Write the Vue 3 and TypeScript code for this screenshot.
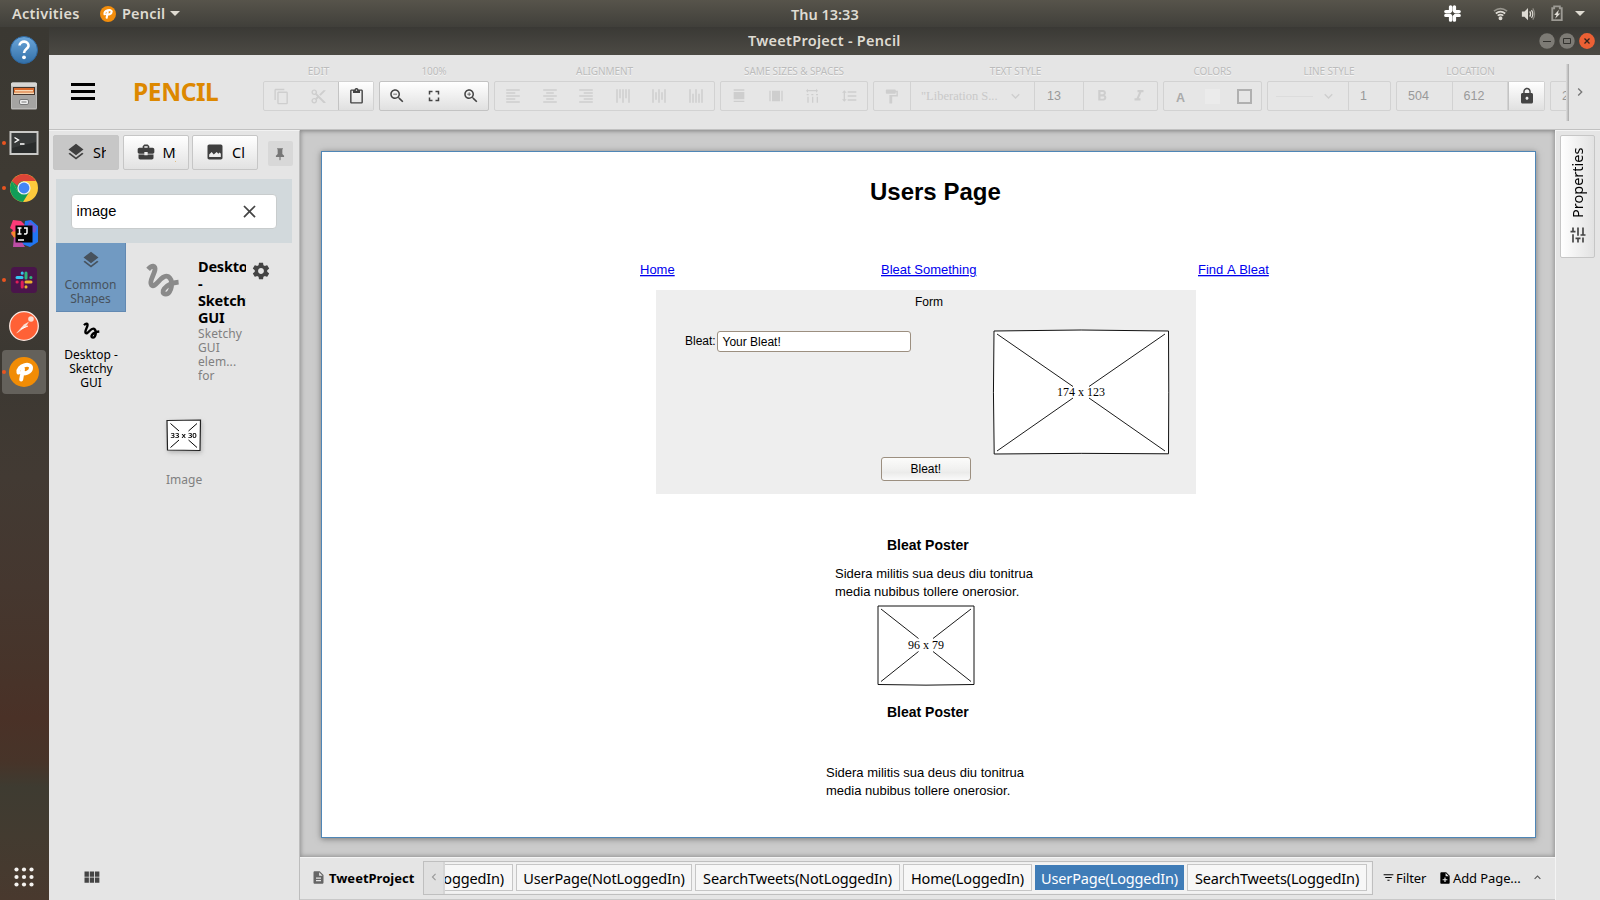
<script setup lang="ts">
import { h } from 'vue'

const copy = 'M16 1H4c-1.1 0-2 .9-2 2v14h2V3h12V1zm3 4H8c-1.1 0-2 .9-2 2v14c0 1.1.9 2 2 2h11c1.1 0 2-.9 2-2V7c0-1.1-.9-2-2-2zm0 16H8V7h11v14z'
const lens = 'M15.5 14h-.79l-.28-.27C15.41 12.59 16 11.11 16 9.5 16 5.91 13.09 3 9.5 3S3 5.91 3 9.5 5.91 16 9.5 16c1.61 0 3.09-.59 4.23-1.57l.27.28v.79l5 4.99L20.49 19l-4.99-5zm-6 0C7.01 14 5 11.99 5 9.5S7.01 5 9.5 5 14 7.01 14 9.5 11.99 14 9.5 14z'
const paths: Record<string, string> = {
  layers: 'M11.99 18.54l-7.37-5.73L3 14.07l9 7 9-7-1.63-1.27-7.38 5.74zM12 16l7.36-5.73L21 9l-9-7-9 7 1.63 1.27L12 16z',
  briefcase: 'M10 16v-1H3.01L3 19c0 1.11.89 2 2 2h14c1.11 0 2-.89 2-2v-4h-7v1h-4zm10-9h-4.01V5l-2-2h-4l-2 2v2H4c-1.1 0-2 .9-2 2v3c0 1.11.89 2 2 2h6v-2h4v2h6c1.1 0 2-.9 2-2V9c0-1.1-.9-2-2-2zm-6 0h-4V5h4v2z',
  image: 'M21 19V5c0-1.1-.9-2-2-2H5c-1.1 0-2 .9-2 2v14c0 1.1.9 2 2 2h14c1.1 0 2-.9 2-2zM5 18v-3l3-3 2.5 3L14 12l2 2 1.500-1.500L19 14v4z',
  pin: 'M7 2h10v2h-1v8l3 3v2h-6v5l-1 1-1-1v-5H5v-2l3-3V4H7z',
  close: 'M19 6.4L17.600 5 12 10.600 6.400 5 5 6.400 10.600 12 5 17.600 6.400 19 12 13.400 17.600 19 19 17.600 13.400 12z',
  copy,
  cut: 'M9.64 7.64c.23-.5.36-1.05.36-1.64 0-2.21-1.79-4-4-4S2 3.79 2 6s1.79 4 4 4c.59 0 1.14-.13 1.64-.36L10 12l-2.36 2.36C7.14 14.13 6.59 14 6 14c-2.21 0-4 1.79-4 4s1.79 4 4 4 4-1.79 4-4c0-.59-.13-1.14-.36-1.64L12 14l7 7h3v-1L9.640 7.640zM6 8c-1.100 0-2-.89-2-2s.9-2 2-2 2 .89 2 2-.9 2-2 2zm0 12c-1.100 0-2-.89-2-2s.9-2 2-2 2 .89 2 2-.9 2-2 2zM19 3l-6 6 2 2 7-7V3z',
  paste: 'M19 2h-4.180C14.400.840 13.300 0 12 0c-1.300 0-2.400.840-2.820 2H5c-1.100 0-2 .9-2 2v16c0 1.100.9 2 2 2h14c1.100 0 2-.9 2-2V4c0-1.100-.9-2-2-2zm-7 0c.55 0 1 .45 1 1s-.45 1-1 1-1-.45-1-1 .45-1 1-1zm7 18H5V4h2v3h10V4h2v16z',
  zoomOut: lens + 'M7 9h5v1H7z',
  zoomIn: lens + 'M12 10h-2v2H9v-2H7V9h2V7h1v2h2v1z',
  fit: 'M7 14H5v5h5v-2H7v-3zm-2-4h2V7h3V5H5v5zm12 7h-3v2h5v-5h-2v3zM14 5v2h3v3h2V5h-5z',
  left: 'M15 15H3v2h12v-2zm0-8H3v2h12V7zM3 13h18v-2H3v2zm0 8h18v-2H3v2zM3 3v2h18V3H3z',
  center: 'M7 15v2h10v-2H7zm-4 6h18v-2H3v2zm0-8h18v-2H3v2zm4-6v2h10V7H7zM3 3v2h18V3H3z',
  right: 'M3 21h18v-2H3v2zm6-4h12v-2H9v2zm-6-4h18v-2H3v2zm6-4h12V7H9v2zM3 3v2h18V3H3z',
  top: 'M3 3h2v18H3zM7 3h2v12H7zM11 3h2v18h-2zM15 3h2v12h-2zM19 3h2v18h-2z',
  middle: 'M3 3h2v18H3zM7 7h2v10H7zM11 3h2v18h-2zM15 7h2v10h-2zM19 3h2v18h-2z',
  bottom: 'M3 3h2v18H3zM7 9h2v12H7zM11 3h2v18h-2zM15 9h2v12h-2zM19 3h2v18h-2z',
  sameWidth: 'M4 2h16v2H4zM4 6h16v11H4zM4 19h16v2H4z',
  sameHeight: 'M2 4h2v16H2zM6 4h12v16H6zM20 4h2v16h-2z',
  spaceH: 'M3 4l3-3v2h12V1l3 3-3 3V5H6v2zM4 9h3v2H4zM11 9h3v2h-3zM18 9h3v2h-3zM5 13h2v9H5zM12 13h2v9h-2zM19 13h2v9h-2z',
  spaceV: 'M6 7h2.500L5 3.500 1.500 7H4v10H1.500L5 20.500 8.500 17H6V7zM10 5v2h13V5H10zM10 19h13v-2H10v2zM10 13h13v-2H10v2z',
  paint: 'M18 4V3c0-.55-.45-1-1-1H5c-.55 0-1 .45-1 1v4c0 .55.45 1 1 1h12c.55 0 1-.45 1-1V6h1v4H9v11c0 .55.45 1 1 1h2c.55 0 1-.45 1-1v-9h8V4h-3z',
  down: 'M16.600 8L12 12.600 7.400 8 6 9.400l6 6 6-6z',
  up: 'M12 8l-6 6 1.400 1.400L12 10.800l4.600 4.600L18 14z',
  next: 'M10 6L8.600 7.400 13.200 12l-4.600 4.600L10 18l6-6z',
  prev: 'M15.400 7.400L14 6l-6 6 6 6 1.400-1.400L10.800 12z',
  bold: 'M15.600 10.790c.97-.67 1.650-1.770 1.650-2.790 0-2.260-1.750-4-4-4H7v14h7.040c2.090 0 3.710-1.700 3.710-3.790 0-1.520-.86-2.820-2.150-3.420zM10 6.500h3c.83 0 1.500.67 1.500 1.500s-.67 1.500-1.500 1.500h-3v-3zm3.500 9H10v-3h3.500c.83 0 1.500.67 1.500 1.500s-.67 1.500-1.500 1.500z',
  italic: 'M10 4v3h2.210l-3.420 8H6v3h8v-3h-2.210l3.420-8H18V4z',
  lock: 'M18 8h-1V6c0-2.760-2.240-5-5-5S7 3.240 7 6v2H6c-1.100 0-2 .9-2 2v10c0 1.100.9 2 2 2h12c1.100 0 2-.9 2-2V10c0-1.100-.9-2-2-2zm-6 9c-1.100 0-2-.9-2-2s.9-2 2-2 2 .9 2 2-.9 2-2 2zm3.100-9H8.900V6c0-1.710 1.390-3.100 3.100-3.100 1.710 0 3.100 1.390 3.100 3.100v2z',
  tune: 'M3 17v2h6v-2H3zM3 5v2h10V5H3zm10 16v-2h8v-2h-8v-2h-2v6h2zM7 9v2H3v2h4v2h2V9H7zm14 4v-2H11v2h10zm-6-4h2V7h4V5h-4V3h-2v6z',
  file: 'M14 2H6c-1.100 0-1.990.9-1.990 2L4 20c0 1.100.89 2 1.990 2H18c1.100 0 2-.9 2-2V8l-6-6zm2 16H8v-2h8v2zm0-4H8v-2h8v2zm-3-5V3.500L18.500 9H13z',
  add: 'M14 2H6c-1.100 0-1.990.9-1.990 2L4 20c0 1.100.89 2 1.990 2H18c1.100 0 2-.9 2-2V8l-6-6zm2 14h-3v3h-2v-3H8v-2h3v-3h2v3h3v2zm-3-7V3.500L18.500 9H13z',
  filter: 'M10 18h4v-2h-4v2zM3 6v2h18V6H3zm3 7h12v-2H6v2z',
  grid: 'M4 11h5V5H4v6zm0 7h5v-6H4v6zm6 0h5v-6h-5v6zm6 0h5v-6h-5v6zm-6-7h5V5h-5v6zm6-6v6h5V5h-5z',
  gear: 'M19.430 12.980c.04-.32.07-.64.07-.98s-.03-.66-.07-.98l2.110-1.650c.19-.15.24-.42.12-.64l-2-3.460c-.12-.22-.39-.3-.61-.22l-2.490 1c-.52-.4-1.080-.73-1.690-.98l-.38-2.650C14.460 2.180 14.250 2 14 2h-4c-.25 0-.46.18-.49.42l-.38 2.650c-.61.25-1.170.59-1.690.98l-2.490-1c-.23-.09-.49 0-.61.22l-2 3.460c-.13.22-.07.49.12.64l2.110 1.650c-.04.32-.07.65-.07.98s.03.66.07.98l-2.110 1.650c-.19.15-.24.42-.12.64l2 3.460c.12.22.39.3.61.22l2.490-1c.52.4 1.080.73 1.690.98l.38 2.650c.03.24.24.42.49.42h4c.25 0 .46-.18.49-.42l.38-2.650c.61-.25 1.170-.59 1.690-.98l2.490 1c.23.09.49 0 .61-.22l2-3.460c.12-.22.07-.49-.12-.64l-2.110-1.650zM12 15.500c-1.930 0-3.500-1.570-3.500-3.500s1.570-3.500 3.500-3.500 3.500 1.570 3.500 3.500-1.570 3.500-3.500 3.500z',
}

const Icon = (props: { name: string; size?: number }) =>
  h('svg', { viewBox: '0 0 24 24', width: props.size ?? 18, height: props.size ?? 18, fill: 'currentColor' }, [
    h('path', { d: paths[props.name] }),
  ])
Icon.props = ['name', 'size']

const squiggle = 'M1.500 4.500C4 1.500 7 1.500 6.300 5C5.500 9 2 13 3.800 15.500C6.500 18.500 11 7.500 15.500 9.500C20 12 18 22 14 22C9.500 22 12.500 14.500 23 13.500'

const alignIcons = ['left', 'center', 'right', 'top', 'middle', 'bottom']
const sizeIcons = ['sameWidth', 'sameHeight', 'spaceH', 'spaceV']

interface PageTab { label: string; cls: string }
const tabs: PageTab[] = [
  { label: 'UserPage(NotLoggedIn)', cls: 't1' },
  { label: 'SearchTweets(NotLoggedIn)', cls: 't2' },
  { label: 'Home(LoggedIn)', cls: 't3' },
  { label: 'UserPage(LoggedIn)', cls: 't4 selected' },
  { label: 'SearchTweets(LoggedIn)', cls: 't5' },
]
</script>

<template>
  <div class="desktop">
    <header class="topbar">
      <span class="activities">Activities</span>
      <svg class="app-mark" viewBox="0 0 30 30"><circle cx="15" cy="15" r="15" fill="#f28d0c" /><path d="M12.500 22L14.500 11M8.500 15.500C7 8 22 5 22 10.500C22 16 15 16.500 12 16" fill="none" stroke="#fff" stroke-width="4" stroke-linecap="round" /></svg>
      <span class="appname">Pencil</span>
      <i class="caret" />
      <span class="clock">Thu 13:33</span>
      <div class="tray">
        <svg class="slack-mark" viewBox="0 0 20 20" stroke="#fff" stroke-width="3.600" stroke-linecap="round"><path d="M8 3v4M3 8h4.500M12.500 8H17M12 3v4M8 12.500V17M12 13v4M3 12h4.500M13 12h4" /></svg>
        <svg class="wifi" viewBox="0 0 16 16" fill="none" stroke="#dedbd4" stroke-width="1.800"><path d="M1 5.500Q8 0 15 5.500" opacity=".5" /><path d="M3 8Q8 4 13 8M5 10.300Q8 8 11 10.300" /><circle cx="8" cy="13" r="1.200" fill="#dedbd4" /></svg>
        <svg class="volume" viewBox="0 0 16 16"><path d="M1 5h3l4-4v14l-4-4H1z" fill="#dedbd4" /><path d="M10 5q2 3 0 6M12 3.500q3 4.500 0 9" fill="none" stroke="#dedbd4" stroke-width="1.400" /><path d="M13.500 1.500q4 6.500 0 13" fill="none" stroke="#8c8982" stroke-width="1.400" /></svg>
        <svg class="battery" viewBox="0 0 14 18"><path d="M2 3.500h2V1.500h6v2h2v12.500H2z" fill="none" stroke="#9c9a94" stroke-width="2" /><path d="M9 5L4 10.500h2.500L5 14.500l5.500-5.500H8z" fill="#dedbd4" /></svg>
        <i class="caret" />
      </div>
    </header>

    <aside class="dock">
      <div class="slot s1">
        <svg viewBox="0 0 30 30"><defs><linearGradient id="help" x2="0" y2="1"><stop stop-color="#6ba6da" /><stop offset="1" stop-color="#3370a8" /></linearGradient></defs><circle cx="15" cy="15" r="13.500" fill="url(#help)" stroke="#2d67a0" /><path d="M10.500 10.500C11 5 20 5.500 19.500 11C19 14 15 14.500 15 18" fill="none" stroke="#fff" stroke-width="2.600" /><circle cx="15" cy="22.300" r="1.900" fill="#fff" /></svg>
      </div>
      <div class="slot s2">
        <svg viewBox="0 0 30 30"><rect x="2" y="1.500" width="26" height="27" rx="1.500" fill="#b9b8b6" /><rect x="2" y="1.500" width="26" height="4" rx="1.500" fill="#d8d7d5" /><rect x="4" y="6" width="22" height="8" fill="#43352e" /><path d="M5 7h20v5H5z" fill="#d96a2d" /><path d="M6 9h18v1.500H6zM5 11.500h20V13H5z" fill="#f6d8b4" /><path d="M3 14h24v13H3z" fill="#a5a4a2" /><rect x="10.500" y="18.500" width="9" height="5" rx="1.500" fill="#eee" stroke="#777" /><path d="M12.500 21h5" stroke="#777" /></svg>
      </div>
      <div class="slot s3"><b class="dot" />
        <svg viewBox="0 0 30 30"><rect x="1.500" y="4" width="27" height="22" fill="#292c2c" stroke="#c9c9c7" stroke-width="2" /><path d="M3 5h24v9L3 20z" fill="#414545" opacity=".6" /><path d="M5.500 9.500l4 2.500-4 2.500M11 16h4.500" fill="none" stroke="#fff" stroke-width="1.400" /></svg>
      </div>
      <div class="slot s4"><b class="dot" />
        <svg viewBox="0 0 30 30"><circle cx="15" cy="15" r="14" fill="#fdc93c" /><path d="M2.900 8A14 14 0 0 0 14 29l6.500-10.500L9 19z" fill="#109d58" /><path d="M2.900 8L9 19l5-5V8.500z" fill="#109d58" /><path d="M2.900 8A14 14 0 0 1 27.100 8H15q-5 0-6.500 5z" fill="#db4437" /><circle cx="15" cy="15" r="6.600" fill="#f2f2f2" /><circle cx="15" cy="15" r="5.400" fill="#4285f4" /></svg>
      </div>
      <div class="slot s5">
        <svg viewBox="0 0 30 30"><path d="M4 1l8 1 4 4-8 15-6-6 2-4-3-2z" fill="#fc3a78" /><path d="M2 13l6-1v6l-3 1z" fill="#f68b2c" /><path d="M16 2l6-1 7 6v16l-8 5-8-3z" fill="#2176f3" /><path d="M20 2l8 6-2 6-8-4z" fill="#6b57d6" /><path d="M5 18l8 5 3 5-5 0-7 0z" fill="#bd4da6" /><rect x="6.500" y="6.500" width="17" height="17" fill="#050505" /><path d="M8.500 9h4M10.500 9v6M8.500 15h4M15 9h3v4.500q0 2-3 1.200M9 21h6" fill="none" stroke="#fff" stroke-width="1.500" /></svg>
      </div>
      <div class="slot s6"><b class="dot" />
        <svg viewBox="0 0 30 30"><rect x="2" y="2" width="26" height="26" rx="3.500" fill="#4a154b" /><g stroke-width="3" stroke-linecap="round"><path d="M13.200 8v.2M8 12.500h5" stroke="#36c5f0" /><path d="M17 8v5M21.800 12.500h.2" stroke="#2eb67d" /><path d="M17 17h5M17 21.800v.2" stroke="#ecb22e" /><path d="M13.200 17v5M8 17h.2" stroke="#e01e5a" /></g></svg>
      </div>
      <div class="slot s7">
        <svg viewBox="0 0 30 30"><circle cx="15" cy="15" r="14.300" fill="#ff6136" stroke="#fbe9e2" stroke-width="1.300" /><path d="M7 22.500l8-9 5-3-3 5-8 6z" fill="#f9ded3" /><circle cx="22" cy="8" r="2.800" fill="#f9ded3" /><path d="M12 18l7-3" stroke="#fff" /></svg>
      </div>
      <div class="slot s8 active"><b class="dot" />
        <svg viewBox="0 0 30 30"><circle cx="15" cy="15" r="15" fill="#f18c05" /><path d="M12.200 22.500L14 12M9.500 15.500C8 8.500 22 5 22 10.800C22 16 15.500 16.800 12.500 16.300" fill="none" stroke="#fff" stroke-width="4" stroke-linecap="round" /></svg>
      </div>
      <div class="slot s9">
        <svg viewBox="0 0 30 30" fill="#f5f3f0"><template v-for="r in 3" :key="r"><circle v-for="c in 3" :key="c" :cx="c * 7.500" :cy="r * 7.500" r="2.100" /></template></svg>
      </div>
    </aside>

    <main class="window">
      <div class="titlebar">
        <span class="wtitle">TweetProject - Pencil</span>
        <div class="wbuttons">
          <svg viewBox="0 0 16 16"><circle cx="8" cy="8" r="7.700" fill="#7d7b75" /><path d="M4 8.500h8" stroke="#33322e" /></svg>
          <svg viewBox="0 0 16 16"><circle cx="8" cy="8" r="7.700" fill="#7d7b75" /><path d="M4.500 5.500h7v5h-7z" fill="none" stroke="#33322e" /></svg>
          <svg viewBox="0 0 16 16"><circle cx="8" cy="8" r="7.900" fill="#ec6034" /><path d="M5.500 5.500l5 5M10.500 5.500l-5 5" stroke="#33231c" stroke-width="1.300" /></svg>
        </div>
      </div>

      <div class="toolbar">
        <div class="burger"><i /><i /><i /></div>
        <span class="brand">PENCIL</span>
        <div class="groups">
          <section class="g edit">
            <label>EDIT</label>
            <div class="box"><span class="b e1"><Icon name="copy" :size="17" /></span><span class="b e1"><Icon name="cut" :size="17" /></span><span class="b on paste"><Icon name="paste" :size="17" /></span></div>
          </section>
          <section class="g zoom">
            <label>100%</label>
            <div class="box on"><span class="b z1"><Icon name="zoomOut" /></span><span class="b"><Icon name="fit" /></span><span class="b z3"><Icon name="zoomIn" /></span></div>
          </section>
          <section class="g align">
            <label>ALIGNMENT</label>
            <div class="box"><span v-for="n in alignIcons" :key="n" class="b"><Icon :name="n" /></span></div>
          </section>
          <section class="g sizes">
            <label>SAME SIZES &amp; SPACES</label>
            <div class="box"><span v-for="n in sizeIcons" :key="n" class="b"><Icon :name="n" :size="16" /></span></div>
          </section>
          <section class="g text">
            <label>TEXT STYLE</label>
            <div class="box">
              <span class="b brush"><Icon name="paint" :size="17" /></span>
              <span class="b family"><em>"Liberation S...</em><Icon name="down" :size="17" /></span>
              <span class="b num">13</span>
              <span class="b letter"><Icon name="bold" /></span>
              <span class="b letter"><Icon name="italic" /></span>
            </div>
          </section>
          <section class="g colors">
            <label>COLORS</label>
            <div class="box"><span class="ink">A</span><i class="fill" /><i class="stroke" /></div>
          </section>
          <section class="g line">
            <label>LINE STYLE</label>
            <div class="box"><span class="b dash"><i /><Icon name="down" :size="17" /></span><span class="b one">1</span></div>
          </section>
          <section class="g loc">
            <label>LOCATION</label>
            <div class="box"><span class="b val">504</span><span class="b val">612</span><span class="b on lock"><Icon name="lock" :size="18" /></span></div>
          </section>
          <section class="g cut"><div class="box">2</div></section>
        </div>
        <div class="more"><Icon name="next" :size="16" /></div>
      </div>

      <div class="body">
        <aside class="left">
          <nav class="ptabs">
            <span class="ptab cur"><Icon name="layers" :size="20" /><em>Shapes</em></span>
            <span class="ptab"><Icon name="briefcase" :size="20" /><em class="m">My Stuff</em></span>
            <span class="ptab"><Icon name="image" :size="20" /><em class="c">Clipart</em></span>
            <span class="pin"><Icon name="pin" :size="14" /></span>
          </nav>
          <div class="search"><div class="field"><span>image</span><Icon name="close" :size="21" /></div></div>
          <div class="lib">
            <div class="cats">
              <div class="cat sel"><Icon name="layers" :size="20" /><p>Common<br>Shapes</p></div>
              <div class="cat"><svg class="sq" viewBox="0 0 24 24"><path :d="squiggle" fill="none" stroke="#000" stroke-width="3.400" /></svg><p>Desktop -<br>Sketchy<br>GUI</p></div>
            </div>
            <div class="detail">
              <div class="head">
                <svg class="sqb" viewBox="0 0 24 24"><path :d="squiggle" fill="none" stroke="#8a8a8a" stroke-width="3.400" /></svg>
                <div class="info"><h3>Desktop<br>-<br>Sketchy<br>GUI</h3><p>Sketchy<br>GUI<br>elem...<br>for</p></div>
                <Icon class="gear" name="gear" :size="20" />
              </div>
              <div class="shape">
                <svg viewBox="0 0 36 33"><path d="M1 1.500L34.500 1L34 31.500L1.500 31z" fill="#fff" stroke="#222" stroke-width="1.200" /><path d="M4.500 4.500l8.500 7.500M31 4.500l-8.500 7.500M4.500 28.500l8.500-7.500M31 28.500l-8.500-7.500" stroke="#000" /><text x="17.700" y="19.300" text-anchor="middle" class="dims">33 x 30</text></svg>
                <p>Image</p>
              </div>
            </div>
          </div>
          <Icon class="viewmode" name="grid" :size="21" />
        </aside>

        <div class="center">
          <div class="stage">
            <svg class="page" viewBox="322 152 1213 685">
              <text class="h1" x="870" y="200">Users Page</text>
              <g class="link">
                <text x="640" y="274">Home</text><text x="881" y="274">Bleat Something</text><text x="1198" y="274">Find A Bleat</text>
              </g>
              <path d="M656 290h540v204H656z" fill="#eeeeee" />
              <g class="small">
                <text x="915" y="306">Form</text><text x="685" y="345">Bleat:</text>
                <rect x="717.500" y="331.500" width="193" height="20" rx="2.500" fill="#fff" stroke="#9c8f80" />
                <text x="722.500" y="346">Your Bleat!</text>
                <defs><linearGradient id="btn" x2="0" y2="1"><stop stop-color="#fcfcfb" /><stop offset=".5" stop-color="#f1f1f0" /><stop offset=".65" stop-color="#ebebea" /><stop offset="1" stop-color="#fbfbfb" /></linearGradient></defs>
                <rect x="881.500" y="457.500" width="89" height="23" rx="2.500" fill="url(#btn)" stroke="#9c8f80" />
                <text x="910.500" y="473">Bleat!</text>
              </g>
              <g stroke="#111" stroke-width="1" fill="#fff">
                <path d="M994 331Q1081 329 1168.500 331Q1169 392 1168.500 453.800Q1081 452.800 994.200 454Q992.800 392 994 331z" />
                <path d="M878 606H974V684.500Q926 685.800 878 684.500z" />
              </g>
              <path d="M997 334l76 52.500M1165 334l-76 52.500M997 451l76-53M1165 451l-76-53M881 609l37.500 29.500M971 609l-38 29.500M881 681.500l37.500-30M971 681.500l-38-30" stroke="#000" stroke-width=".9" />
              <g class="serif"><text x="1081" y="396">174 x 123</text><text x="926" y="649">96 x 79</text></g>
              <g class="h2"><text x="887" y="550">Bleat Poster</text><text x="887" y="717">Bleat Poster</text></g>
              <g class="para">
                <text x="835" y="578">Sidera militis sua deus diu tonitrua</text><text x="835" y="596">media nubibus tollere onerosior.</text>
                <text x="826" y="777">Sidera militis sua deus diu tonitrua</text><text x="826" y="795">media nubibus tollere onerosior.</text>
              </g>
            </svg>
          </div>
          <footer class="pages">
            <Icon class="doc" name="file" :size="15" />
            <strong>TweetProject</strong>
            <div class="strip">
              <span class="prev"><Icon name="prev" :size="14" /></span>
              <span class="tab first"><em>LoggedIn)</em></span>
              <span v-for="t in tabs" :key="t.label" class="tab" :class="t.cls"><em>{{ t.label }}</em></span>
            </div>
            <span class="act filter"><Icon name="filter" :size="13" /><em>Filter</em></span>
            <span class="act addp"><Icon name="add" :size="14" /><em>Add Page...</em></span>
            <Icon class="upc" name="up" :size="13" />
          </footer>
        </div>

        <aside class="rightbar">
          <div class="prop"><span>Properties</span><Icon name="tune" :size="20" /></div>
        </aside>
      </div>
    </main>
  </div>
</template>

<style>
body { margin: 0; overflow: hidden; }
</style>

<style scoped>
* { box-sizing: border-box; }
em { font-style: normal; }
p, h3 { margin: 0; }
svg { display: block; flex: none; }
.desktop { width: 1600px; height: 900px; display: grid; grid-template: 27px 873px / 49px 1551px; overflow: hidden; font-family: "Noto Sans", "Open Sans", sans-serif; font-stretch: 90%; color: #000; white-space: nowrap; background: #3d3a34; }

.topbar { grid-column: 1 / 3; display: flex; align-items: center; position: relative; background: linear-gradient(#57544b, #403f3a); color: #dfdbd2; font-weight: 600; font-size: 14.500px; line-height: 27px; }
.activities { margin-left: 12px; width: 88px; letter-spacing: .3px; }
.app-mark { width: 16px; height: 16px; }
.appname { margin-left: 6px; width: 48px; letter-spacing: .2px; }
.caret { width: 0; height: 0; border: 5px solid transparent; border-top-color: #dfdbd2; border-bottom: 0; }
.clock { position: absolute; left: 791px; line-height: 26px; }
.tray { margin-left: auto; margin-right: 15px; display: flex; align-items: center; }
.slack-mark { width: 19px; height: 19px; margin-right: 31px; }
.wifi { width: 15px; height: 15px; margin-right: 12px; }
.volume { width: 16px; height: 14px; margin-right: 14px; }
.battery { width: 14px; height: 17px; margin-right: 11px; }

.dock { position: relative; display: flex; flex-direction: column; background: linear-gradient(#3a3832 0, #3e3a33 150px, #423a34 250px, #3b3832 330px, #423a33 450px, #45372f 560px, #47342a 640px, #4a3127 690px, #473429 735px, #3e3b31 760px, #433b30 810px, #49392e 100%); }
.slot { width: 44px; height: 44px; margin-left: 2px; border-radius: 4px; display: flex; align-items: center; justify-content: center; position: relative; flex: none; }
.slot svg { width: 30px; height: 30px; }
.s1 { margin-top: 1px; }
.s2 { margin-top: 2px; }
.s3 { margin-top: 3px; }
.s4 { margin-top: 1px; }
.s5, .s6, .s7, .s8 { margin-top: 2px; }
.s9 { margin-top: auto; margin-bottom: 1px; }
.active { background: #64615b; }
.dot { position: absolute; left: 0; top: 20px; width: 4px; height: 4px; border-radius: 2px; background: #e95420; }

.window { display: flex; flex-direction: column; background: #e5e5e5; }
.titlebar { height: 28px; display: flex; align-items: center; background: linear-gradient(#3a3935, #4c4a44); color: #dfdbd2; font-weight: 600; font-size: 14.500px; }
.wtitle { margin-left: 699px; line-height: 24px; padding-bottom: 2px; letter-spacing: .28px; }
.wbuttons { margin-left: auto; margin-right: 5px; display: flex; gap: 4px; }
.wbuttons svg { width: 16px; height: 16px; }

.toolbar { height: 75px; border-bottom: 1px solid #c1c1c1; display: flex; background: #e5e5e5; }
.burger { width: 24px; margin: 28px 0 0 22px; display: flex; flex-direction: column; gap: 4.400px; }
.burger i { height: 2.600px; background: #000; }
.brand { margin: 19px 0 0 38px; width: 130px; font-size: 24.500px; line-height: 36px; font-weight: 700; color: #dd8800; letter-spacing: -.4px; }
.groups { width: 1306px; display: flex; gap: 5px; overflow: hidden; padding-top: 9px; }
.g { flex: none; }
.g label { display: block; text-align: center; height: 17px; line-height: 15px; font-size: 10px; color: #bcbcbc; text-shadow: 0 1px #f6f6f6; letter-spacing: -.1px; }
.box { height: 30px; border: 1px solid #d2d2d2; border-radius: 2px; display: flex; align-items: stretch; background: #e6e6e6; color: #cecece; }
.b { flex: 1; display: flex; align-items: center; justify-content: center; }
.b.on, .box.on { background: linear-gradient(#fff, #e0e0e0); color: #444; border-color: #c3c3c3; }
.edit { width: 111px; }
.e1 { flex: 0 0 37px; padding-right: 2px; }
.paste { border-left: 1px solid #c8c8c8; }
.zoom { width: 110px; }
.z1 { padding-right: 2px; }
.z3 { padding-left: 2px; }
.align { width: 221px; }
.sizes { width: 148px; }
.text { width: 285px; }
.brush { flex: 0 0 37px; border-right: 1px solid #d2d2d2; padding-right: 2px; }
.family { flex: 0 0 124px; border-right: 1px solid #d2d2d2; font: 12.500px "Liberation Serif", serif; }
.family em { width: 76px; margin-right: 10px; color: #c9c9c9; }
.num { flex: 0 0 49px; border-right: 1px solid #d2d2d2; font: 12.500px "Liberation Sans", sans-serif; color: #999; justify-content: flex-start; padding-left: 12px; }
.colors { width: 99px; }
.ink { font: bold 12.500px "Liberation Sans", sans-serif; color: #aaa; line-height: 30px; margin-left: 12px; width: 29px; padding-top: 1px; }
.fill { width: 15px; height: 15px; background: #ebebeb; margin: 7px 17px 0 0; }
.stroke { width: 15px; height: 15px; border: 2px solid #b0b0b0; margin-top: 7px; }
.line { width: 124px; }
.dash { flex: 0 0 81px; border-right: 1px solid #d2d2d2; gap: 7px; padding-right: 3px; }
.dash i { width: 37px; height: 1px; background: #dcdcdc; }
.one, .val, .g.cut .box { font: 12.500px "Liberation Sans", sans-serif; color: #999; justify-content: flex-start; }
.one { padding-left: 11px; }
.loc { width: 149px; }
.val { flex: 0 0 55.500px; padding-left: 11px; border-right: 1px solid #d2d2d2; }
.lock { border-left: 1px solid #c8c8c8; }
.g.cut { padding-top: 17px; }
.g.cut .box { width: 60px; padding-left: 11px; align-items: center; }
.more { width: 31px; margin: 10px 0; height: 56px; display: flex; align-items: center; padding-left: 3px; color: #777; position: relative; padding-bottom: 3px; }
.more::before { content: ""; position: absolute; left: -3px; top: -1px; bottom: 0; width: 3px; background: linear-gradient(90deg, #e0e0e0, #a8a8a8); }

.body { flex: 1; min-height: 0; display: flex; }
.left { width: 251px; border-right: 1px solid #bdbdbd; display: flex; flex-direction: column; border-top: 1px solid #f2f2f2; }
.ptabs { display: flex; margin: 4px 0 0 4px; height: 35px; }
.ptab { width: 66px; margin-right: 3.500px; border: 1px solid #c6c6c6; border-radius: 2px; background: linear-gradient(#fff, #e2e2e2); display: flex; align-items: center; padding: 0 0 2px 12px; color: #3f3f3f; flex: none; }
.ptab em { margin-left: 7px; width: 13px; overflow: hidden; color: #000; font-size: 14.500px; }
.cur { background: #c7c7c7; }
.pin { width: 25px; height: 25px; margin: 6px 0 0 6px; border-radius: 2px; background: #d8d8d8; color: #777; display: flex; align-items: center; justify-content: center; }
.search { margin: 9px 0 0 7px; width: 236px; height: 64px; background: #d2d9dc; padding: 15px 15px; }
.field { height: 35px; width: 206px; border: 1px solid #c8cccd; border-radius: 4px; background: #fff; display: flex; align-items: center; justify-content: space-between; padding: 0 16px 0 4px; font: 14.670px "Liberation Sans", sans-serif; color: #444; }
.field span { color: #000; padding: 0 0 2px .5px; }
.lib { display: flex; margin-left: 7px; flex: 1; }
.cats { width: 70px; font-size: 12px; line-height: 14px; text-align: center; }
.cat { display: flex; flex-direction: column; align-items: center; }
.sel { height: 69px; background: #719ac2; color: #47525d; padding-top: 7px; border-right: 1px solid #6289b2; border-bottom: 1px solid #6289b2; }
.sel p { margin-top: 8px; }
.sq { width: 17px; height: 17px; margin: 10px 0 9px; }
.detail { position: relative; flex: 1; }
.head { display: flex; padding: 13px 0 0 20px; }
.sqb { width: 34px; height: 36px; margin-top: 6px; }
.info { margin-left: 18px; width: 48px; overflow: hidden; padding-top: 2px; }
.info h3 { font-size: 14.500px; line-height: 17px; font-weight: 700; letter-spacing: -.2px; }
.info p { font-size: 12px; line-height: 14px; color: #808080; letter-spacing: .1px; padding-top: 1px; }
.gear { margin: 5px 0 0 5px; color: #444; }
.shape { margin-top: 36px; margin-left: 40px; width: 36px; text-align: center; font-size: 12px; color: #808080; }
.shape svg { width: 36px; height: 33px; filter: drop-shadow(1px 2px 2px #8888); overflow: visible; }
.shape p { margin-top: 19px; line-height: 18px; }
.dims { font: 600 7.800px "Noto Sans", sans-serif; }
.viewmode { margin: 0 0 12px 32px; color: #444; }

.center { width: 1255px; display: flex; flex-direction: column; }
.stage { height: 727px; background: #cbcbcb; box-shadow: inset 0 4px 5px -3px #888, inset 3px 0 4px -2px #999, inset -3px 0 4px -2px #999, inset 0 -4px 5px -3px #999; padding: 21px 19px 19px 21px; }
.page { width: 1215px; height: 687px; background: #fff; border: 1px solid #4f86b6; box-shadow: 0 1px 6px #777; }
.h1 { font: bold 24px "Liberation Sans", sans-serif; }
.h2 { font: bold 14px "Liberation Sans", sans-serif; }
.link { font: 13px "Liberation Sans", sans-serif; font-kerning: none; fill: #0000ee; text-decoration: underline; }
.small { font: 12px "Liberation Sans", sans-serif; }
.para { font: 13px "Liberation Sans", sans-serif; }
.serif { font: 12px "Liberation Serif", serif; text-anchor: middle; }

.pages { height: 43px; border-top: 1px solid #f4f4f4; border-bottom: 1px solid #c8c8c8; display: flex; align-items: center; font-size: 13px; }
.doc { margin-left: 11px; color: #666; margin-bottom: 2px; }
.pages strong { margin-left: 3px; width: 94px; font-weight: 700; padding-bottom: 2px; }
.strip { width: 950px; height: 34px; margin-bottom: 2px; border: 1px solid #bfbfbf; box-shadow: inset 0 0 0 1px #eee; background: #f2f2f2; display: flex; align-items: center; gap: 3px; }
.prev { width: 21px; flex: none; align-self: stretch; display: flex; align-items: center; justify-content: center; background: #e0e0e0; color: #999; border-right: 2px solid #d5d5d5; margin-right: -3px; padding-bottom: 2px; }
.tab { height: 27px; border: 1px solid #c6c6c6; background: #f7f7f7; font-size: 14.500px; letter-spacing: -.15px; display: flex; justify-content: center; align-items: center; flex: none; overflow: hidden; }
.first { width: 68px; border-left: 0; justify-content: flex-end; padding-right: 8px; }
.t1 { width: 176px; }
.t2 { width: 205px; }
.t3 { width: 129px; }
.t4 { width: 149px; }
.t5 { width: 180px; }
.selected { height: 25px; background: #3f7cb7; color: #fff; border: 0; }
.act { display: flex; align-items: center; padding-bottom: 2px; letter-spacing: -.1px; }
.filter { margin-left: 9px; width: 56px; gap: 1px; }
.addp { width: 93px; gap: 1px; }
.upc { color: #555; margin-bottom: 3px; }

.rightbar { flex: 1; background: #e5e5e5; border-left: 1px solid #f4f4f4; border-top: 1px solid #f4f4f4; }
.prop { width: 35px; height: 123px; margin: 4px 0 0 4px; border: 1px solid #c6c6c6; border-radius: 2px; background: linear-gradient(90deg, #fff, #e2e2e2); display: flex; flex-direction: column; align-items: center; padding-top: 11px; color: #444; }
.prop span { writing-mode: vertical-rl; transform: rotate(180deg); height: 71px; margin: 0 2px 7px 0; font-size: 14.500px; color: #000; line-height: 20px; }
.prop svg { transform: rotate(-90deg); }
</style>
